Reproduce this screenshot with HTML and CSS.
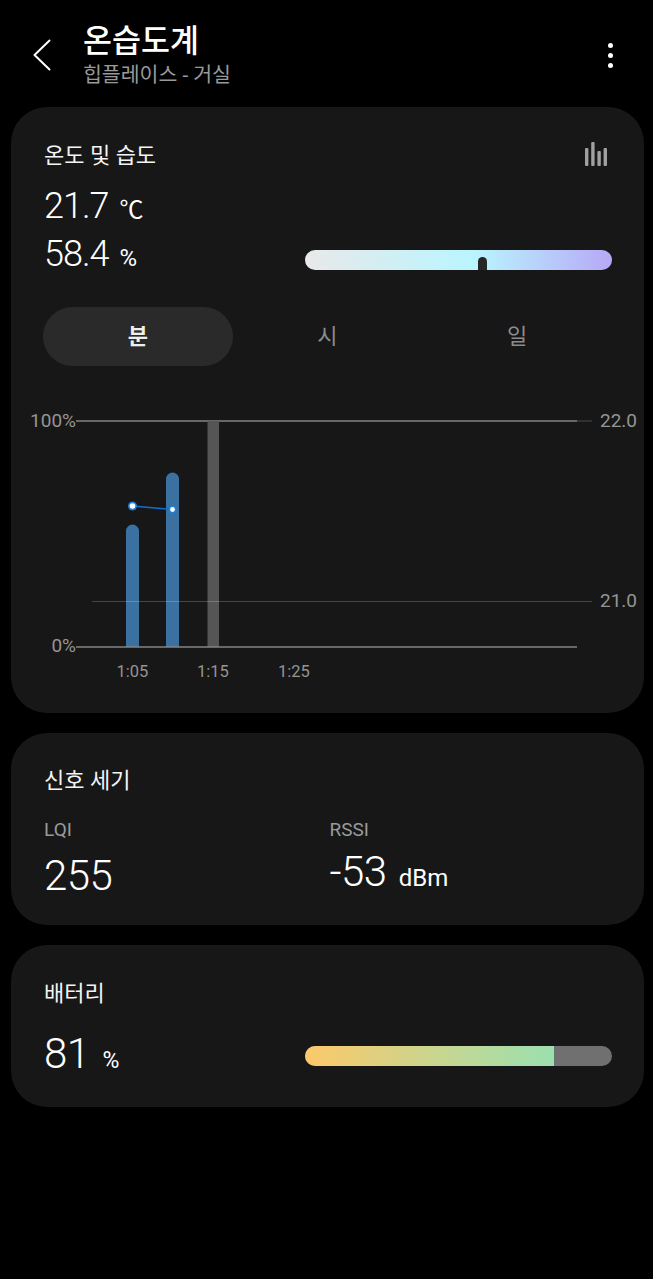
FILE: index.html
```html
<!DOCTYPE html>
<html lang="ko">
<head>
<meta charset="UTF-8" />
<title>온습도계</title>
<link rel="stylesheet" href="styles.css">
</head>
<body>
  <header class="app-bar">
    <svg class="back-icon" width="20" height="32" viewBox="0 0 20 32">
      <path d="M17.500 1.500 L2.500 16 L17.500 30.500" fill="none" stroke="#fff" stroke-width="2" stroke-linecap="round" stroke-linejoin="round" />
    </svg>
    <div class="app-title">
      <h1>온습도계</h1>
      <div class="app-sub">힙플레이스 - 거실</div>
    </div>
    <div class="more-icon"><span></span><span></span><span></span></div>
  </header>

  <main class="cards">
    <section class="card card-climate">
      <div class="card-head">
        <h2>온도 및 습도</h2>
        <svg class="bars-icon" width="24" height="26" viewBox="0 0 24 26">
          <g fill="#a0a0a0">
            <rect x="1" y="7" width="3.4" height="18" rx="1" />
            <rect x="7.2" y="1" width="3.4" height="24" rx="1" />
            <rect x="13.4" y="10" width="3.4" height="15" rx="1" />
            <rect x="19.6" y="7" width="3.4" height="18" rx="1" />
          </g>
        </svg>
      </div>
      <div class="reading reading-temp"><span class="num">21.7</span><span class="unit">℃</span></div>
      <div class="reading-row reading-hum">
        <div class="reading"><span class="num">58.4</span><span class="unit unit-small">%</span></div>
        <div class="gauge">
          <div class="gauge-mark"></div>
        </div>
      </div>
      <div class="tabs">
        <div class="tab active">분</div>
        <div class="tab">시</div>
        <div class="tab">일</div>
      </div>
      <svg class="chart" width="633" height="290" viewBox="11 400 633 290">
        <line x1="76" y1="421" x2="577" y2="421" stroke="#858585" stroke-width="1.5" />
        <line x1="577" y1="421" x2="592" y2="421" stroke="#4a4a4a" />
        <path d="M126 647 V531 a6.5 6.5 0 0 1 13 0 V647 Z" fill="#3b71a0" />
        <path d="M166 647 V479 a6.5 6.5 0 0 1 13 0 V647 Z" fill="#3b71a0" />
        <rect x="207.500" y="421" width="11.500" height="226" fill="#555" />
        <line x1="92" y1="601.5" x2="592" y2="601.5" stroke="#fff" stroke-opacity="0.2" />
        <line x1="76" y1="647" x2="577" y2="647" stroke="#858585" stroke-width="1.5" />
        <line x1="132.500" y1="506" x2="172.500" y2="509.500" stroke="#0f6fcf" stroke-width="1.6" />
        <circle cx="132.500" cy="506" r="4.500" fill="#1f7fd8" />
        <circle cx="132.500" cy="506" r="2.800" fill="#fff" />
        <circle cx="172.500" cy="509.500" r="4" fill="#1f7fd8" />
        <circle cx="172.500" cy="509.500" r="2.400" fill="#fff" />
        <g class="axis-label">
          <text x="76" y="427" text-anchor="end" class="axis-big">100%</text>
          <text x="76" y="652" text-anchor="end" class="axis-big">0%</text>
          <text x="600" y="427" class="axis-big">22.0</text>
          <text x="600" y="607" class="axis-big">21.0</text>
          <text x="132.500" y="677" text-anchor="middle">1:05</text>
          <text x="213" y="677" text-anchor="middle">1:15</text>
          <text x="294" y="677" text-anchor="middle">1:25</text>
        </g>
      </svg>
    </section>

    <section class="card card-signal">
      <h2>신호 세기</h2>
      <div class="signal-cols">
        <div>
          <div class="signal-label">LQI</div>
          <div class="reading signal-lqi"><span class="num num-big">255</span></div>
        </div>
        <div>
          <div class="signal-label">RSSI</div>
          <div class="reading signal-rssi"><span class="num num-big">-53</span><span class="unit unit-dbm">dBm</span></div>
        </div>
      </div>
    </section>

    <section class="card card-battery">
      <h2>배터리</h2>
      <div class="reading-row battery-row">
        <div class="reading"><span class="num num-big">81</span><span class="unit unit-pct">%</span></div>
        <div class="battery-bar">
          <div class="battery-fill" style="width: 81%"></div>
        </div>
      </div>
    </section>
  </main>
</body>
</html>
```

FILE: styles.css
```css
body {
  margin: 0;
  background-color: #000;
  color: #fff;
  font-family: Roboto, "Noto Sans CJK KR", sans-serif;
}
h1, h2 {
  margin: 0;
}
.app-bar {
  height: 107px;
  display: flex;
  box-sizing: border-box;
  padding: 23px 32px 0 32px;
}
.back-icon {
  margin-top: 16px;
}
.app-title {
  margin-left: 31px;
  flex-grow: 1;
}
.app-title h1 {
  font-size: 31.500px;
  line-height: 38px;
  font-weight: 500;
}
.app-sub {
  font-size: 20.500px;
  line-height: 28px;
  color: #9a9a9a;
}
.more-icon {
  width: 6px;
  margin-top: 20px;
  margin-right: 7px;
  display: flex;
  flex-direction: column;
  gap: 5px;
}
.more-icon span {
  width: 5px;
  height: 5px;
  border-radius: 50%;
  background-color: #fff;
}
.cards {
  padding: 0 9px 0 11px;
  display: flex;
  flex-direction: column;
  gap: 20px;
}
.card {
  background-color: #171717;
  border-radius: 36px;
  box-sizing: border-box;
}
.card h2 {
  font-size: 22px;
  line-height: 28px;
  font-weight: 400;
  color: #f4f4f4;
}
.card-climate {
  height: 606px;
  padding-top: 35px;
}
.card-head {
  display: flex;
  justify-content: space-between;
  padding: 0 36px 0 33px;
}
.bars-icon {
  margin-top: -1px;
}
.reading {
  display: flex;
  align-items: baseline;
}
.num {
  font-size: 36px;
  font-weight: 300;
  letter-spacing: -1px;
  line-height: 46px;
}
.num-big {
  font-size: 42px;
  line-height: 52px;
  letter-spacing: -0.500px;
}
.unit {
  font-size: 24px;
  margin-left: 11px;
  letter-spacing: -1px;
}
.unit-small {
  font-size: 24px;
}
.reading-temp {
  padding-left: 33px;
  margin-top: 13px;
}
.reading-row {
  display: flex;
  justify-content: space-between;
  align-items: center;
  padding: 0 32px 0 33px;
}
.reading-hum {
  margin-top: 2px;
}
.gauge {
  position: relative;
  width: 307px;
  height: 20px;
  margin-top: 11px;
  border-radius: 10px;
  background: linear-gradient(90deg, #e9e9e9 0%, #b9f5ff 55%, #b7a8f6 100%);
  overflow: hidden;
}
.gauge-mark {
  position: absolute;
  left: 173px;
  top: 7px;
  width: 9px;
  height: 13px;
  border-radius: 5px 5px 0 0;
  background-color: #262626;
}
.tabs {
  display: grid;
  grid-template-columns: repeat(3, 1fr);
  margin: 30px 32px 0 32px;
}
.tab {
  height: 59px;
  line-height: 59px;
  text-align: center;
  font-size: 22px;
  color: #8c8c8c;
  border-radius: 30px;
}
.tab.active {
  background-color: #2a2a2a;
  color: #eee;
  font-weight: 700;
}
.chart {
  display: block;
  margin-top: 34px;
}
.axis-label text {
  fill: #959595;
  font-size: 16.500px;
}
.axis-label .axis-big {
  font-size: 19px;
}
.card-signal {
  height: 192px;
  padding: 34px 33px 0 33px;
}
.signal-cols {
  display: grid;
  grid-template-columns: 285.500px 1fr;
  margin-top: 23px;
}
.signal-label {
  font-size: 19px;
  line-height: 24px;
  color: #9a9a9a;
}
.signal-lqi {
  margin-top: 8px;
}
.signal-rssi {
  margin-top: 4px;
}
.unit-dbm {
  font-size: 24px;
  margin-left: 12px;
  letter-spacing: 0;
}
.card-battery {
  height: 162px;
  padding: 35px 0 0 0;
}
.card-battery h2 {
  padding-left: 33px;
}
.battery-row {
  margin-top: 20px;
}
.unit-pct {
  font-size: 23px;
  margin-left: 13px;
}
.battery-bar {
  width: 307px;
  height: 20px;
  margin-top: 4px;
  border-radius: 10px;
  background-color: #707070;
  overflow: hidden;
}
.battery-fill {
  height: 100%;
  background: linear-gradient(90deg, #fcc96a 0%, #9be0b0 100%);
}
```
